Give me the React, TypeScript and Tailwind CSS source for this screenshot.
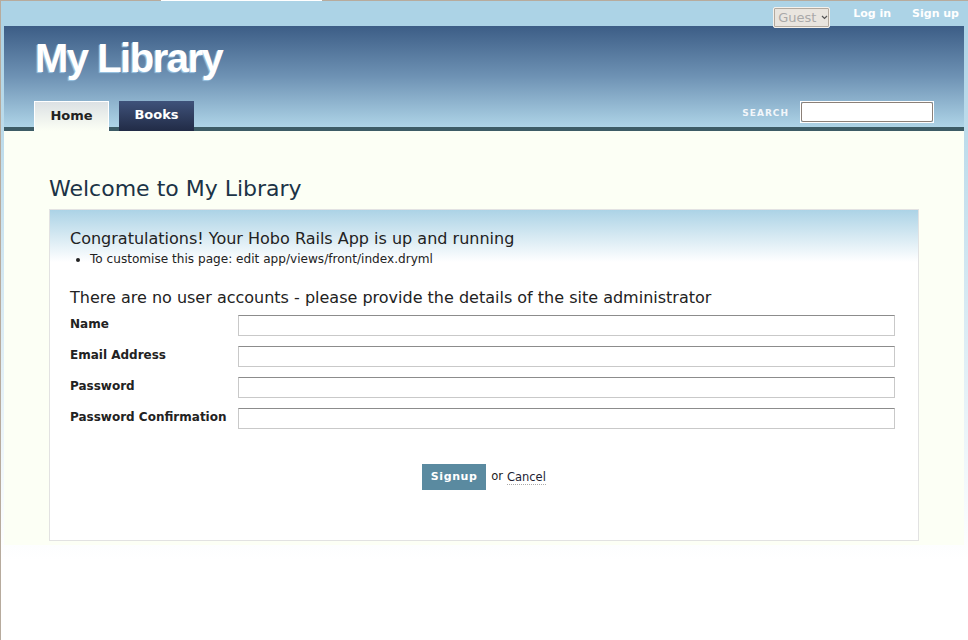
export default function App() {
  const font = { fontFamily: '"DejaVu Sans", Verdana, sans-serif' };
  return (
    <div
      className="min-h-[640px] w-[968px] border-l border-[#b7ab9d] bg-[linear-gradient(#acd3e6_0px,#acd3e6_26px,#ffffff_560px)] text-[#222]"
      style={font}
    >
      {/* top frame line */}
      <div className="flex h-px">
        <div className="w-[160px] bg-[#b7ab9d]" />
        <div className="w-[161px] bg-white" />
        <div className="flex-1 bg-[#b7ab9d]" />
      </div>

      {/* account bar */}
      <div className="flex h-[25px] items-start justify-end pr-[9px]">
        <div className="relative z-10 mt-[6px] flex h-[21px] w-[57px] items-center rounded-[2px] border border-[#f4f1ec] bg-[#e9e5df] shadow-[inset_0_0_0_1px_#b3aa9f]">
          <span className="pl-[4px] text-[13px] leading-none text-[#a9a9a9]">Guest</span>
          <svg className="ml-[5px]" width="7" height="5" viewBox="0 0 7 5">
            <path d="M1 1 L3.5 3.5 L6 1" stroke="#555" strokeWidth="1.2" fill="none" />
          </svg>
        </div>
        <a className="ml-[23px] mt-[6px] text-[11px] font-bold leading-[14px] text-white">Log in</a>
        <a className="ml-[21px] mt-[6px] text-[11px] font-bold leading-[14px] text-white">Sign up</a>
      </div>

      {/* header */}
      <div className="ml-[3px] flex h-[105px] w-[960px] flex-col justify-between border-b-4 border-[#3d5c66] bg-[linear-gradient(#3c5d86,#6e92b4_50%,#aed4e7)]">
        <div
          className="pl-[31px] pt-[12px] text-[40px] font-bold leading-[40px] tracking-[-1.5px] text-white [text-shadow:-1px_1px_1px_#9cc6e6]"
          style={{ fontFamily: '"Liberation Sans", Arial, sans-serif' }}
        >
          My Library
        </div>
        <div className="flex items-end justify-between pl-[30px] pr-[30px]">
          <div className="flex items-end">
            <div className="relative z-10 -mb-[4px] flex h-[30px] w-[75px] items-center justify-center border border-b-0 border-white bg-[linear-gradient(#dce1e4,#fcfff5)] pb-[1px] text-[13px] font-bold text-[#222]">
              Home
            </div>
            <div className="relative z-10 -mb-[4px] ml-[10px] flex h-[30px] w-[75px] items-center justify-center bg-[linear-gradient(#3f527a,#212b46)] pb-[3px] text-[13px] font-bold text-white">
              Books
            </div>
          </div>
          <div className="mb-[4px] flex items-center">
            <span className="pt-[4px] text-[9px] font-bold tracking-[1px] text-[#f2f6fa]">SEARCH</span>
            <div className="ml-[11px] h-[22px] w-[134px] border border-white">
              <div className="h-full w-full rounded-[2px] border border-[#8b8078] bg-white" />
            </div>
          </div>
        </div>
      </div>

      {/* content */}
      <div className="ml-[3px] w-[960px] bg-[#fcfff5] px-[45px] pb-[4px] pt-[45px]">
        <h1 className="text-[22px] font-normal leading-[26px] text-[#1b3346]">Welcome to My Library</h1>
        <div className="mt-[7px] border border-[#e2e2e2] bg-white bg-[linear-gradient(#acd3e6,#ffffff_52px)] pb-[50px] pl-[20px] pr-[20px] pt-[19px]">
          <h2 className="text-[16px] leading-[20px] text-[#222]">
            Congratulations! Your Hobo Rails App is up and running
          </h2>
          <ul className="mt-[2px] list-disc pl-[20px] text-[12.1px] leading-[16px]">
            <li>To customise this page: edit app/views/front/index.dryml</li>
          </ul>
          <h3 className="mt-[21px] text-[16px] leading-[20px] text-[#222]">
            There are no user accounts - please provide the details of the site administrator
          </h3>
          <div className="mt-[5px] flex flex-col gap-[8px] pr-[3px]">
            {['Name', 'Email Address', 'Password', 'Password Confirmation'].map((l) => (
              <div key={l} className="flex items-start">
                <div className="w-[168px] pt-[2px] text-[12px] font-bold leading-[18px] text-[#222]">{l}</div>
                <div className="mt-[2px] h-[21px] flex-1 border border-[#c9c9c9] border-t-[#8c8c8c] bg-white" />
              </div>
            ))}
          </div>
          <div className="mt-[35px] flex items-center justify-center text-[11.5px]">
            <div className="flex h-[26px] w-[64px] items-center justify-center bg-[#5a8aa0] text-[11px] font-bold tracking-[0.6px] text-white">
              Signup
            </div>
            <span className="ml-[5px]">or</span>
            <span className="ml-[4px] border-b border-dotted border-[#aaa] leading-[14px] text-[#223]">Cancel</span>
          </div>
        </div>
      </div>
    </div>
  );
}
